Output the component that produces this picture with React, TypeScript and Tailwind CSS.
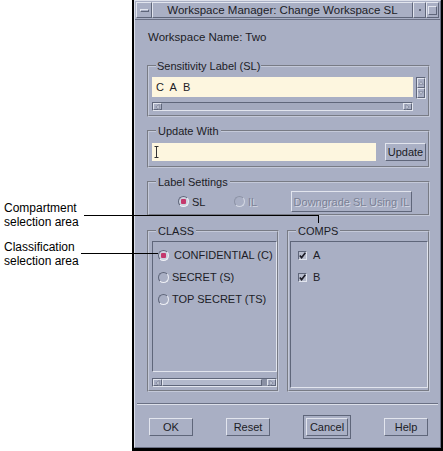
import React from 'react';

// bevel helpers, written out in full so Tailwind picks them up
const raised = 'border border-t-[#e2e5ee] border-l-[#e2e5ee] border-r-[#5f667a] border-b-[#5f667a]';
const sunken = 'border border-t-[#5f667a] border-l-[#5f667a] border-r-[#e2e5ee] border-b-[#e2e5ee]';
const groove = 'border-2 [border-style:groove] border-[#c4c9d9] min-w-0';

const Arrow = ({ dir }: { dir: 'up' | 'down' | 'left' | 'right' }) => {
  const pts = {
    up: '1,6 4,2 7,6',
    down: '1,2 4,6 7,2',
    left: '6,1 2,4 6,7',
    right: '2,1 6,4 2,7',
  }[dir];
  return (
    <svg width="8" height="8" viewBox="0 0 8 8">
      <polygon points={pts} fill="#c3c8d6" stroke="#7a8094" strokeWidth="0.8" />
    </svg>
  );
};

const HScroll = ({ thumb = false }: { thumb?: boolean }) => (
  <div className={`flex h-[9px] ${sunken} bg-[#a3a9be]`}>
    <div className={`w-[9px] flex items-center justify-center ${raised} bg-[#a9afc4]`}>
      <Arrow dir="left" />
    </div>
    {thumb ? (
      <div className="flex-1 flex">
        <div className={`flex-1 ${raised} bg-[#b3b9cc]`} />
        <div className="w-[5px] bg-[#8a90a4]" />
      </div>
    ) : (
      <div className="flex-1" />
    )}
    <div className={`w-[9px] flex items-center justify-center ${raised} bg-[#a9afc4]`}>
      <Arrow dir="right" />
    </div>
  </div>
);

const Radio = ({ on = false, dim = false }: { on?: boolean; dim?: boolean }) => (
  <span
    className={`w-[11px] h-[11px] shrink-0 rounded-full flex items-center justify-center border ${
      dim
        ? 'border-t-[#8d93a6] border-l-[#8d93a6] border-r-[#d4d8e3] border-b-[#d4d8e3]'
        : 'border-t-[#5f667a] border-l-[#5f667a] border-r-[#eef0f5] border-b-[#eef0f5]'
    } ${on ? 'bg-[#cdd1de]' : 'bg-[#a9afc4]'}`}
  >
    {on && <span className="w-[5px] h-[5px] rounded-[1px] bg-[#c4386c]" />}
  </span>
);

const Check = () => (
  <span className={`w-[9px] h-[9px] shrink-0 flex items-center justify-center ${sunken} bg-[#b7bccd]`}>
    <svg width="7" height="7" viewBox="0 0 7 7">
      <polyline points="0.8,3.4 2.6,5.6 6.4,0.8" fill="none" stroke="#1c1c26" strokeWidth="1.6" />
    </svg>
  </span>
);

const Button = ({ label, w, dim = false }: { label: string; w: string; dim?: boolean }) => (
  <div
    className={`${w} h-[18px] flex items-center justify-center ${raised} bg-[#aab0c5] ${
      dim ? 'text-[#7b8195] [text-shadow:1px_1px_0_#d6d9e4]' : ''
    }`}
  >
    {label}
  </div>
);

const Window = () => (
  <div className="w-[311px] h-[451px] shrink-0 flex flex-col border-l-2 border-r-2 border-b-[3px] border-black bg-[#a9afc4] text-[11px] leading-[14px]">
    <div className="flex-1 flex flex-col border border-t-[#dde0ea] border-l-[#dde0ea] border-r-[#6a7084] border-b-[#6a7084]">
      {/* title bar */}
      <div className="flex h-[19px] pt-[1px] pb-[1px] pl-[1px] pr-[1px] border-b border-[#6a7084]">
        <div className={`w-[16px] flex items-center justify-center ${raised}`}>
          <span className={`w-[9px] h-[3px] ${raised}`} />
        </div>
        <div className={`flex-1 flex items-center justify-center ${raised} text-[11.5px]`}>
          Workspace Manager: Change Workspace SL
        </div>
        <div className={`w-[13px] flex items-center justify-center ${raised}`}>
          <span className="w-[2px] h-[2px] bg-[#5f667a]" />
        </div>
        <div className={`w-[13px] flex items-center justify-center ${raised}`}>
          <span className={`w-[9px] h-[9px] ${raised}`} />
        </div>
      </div>

      {/* body */}
      <div className="flex-1 flex flex-col">
        <div className="pl-[12px] pr-[10px] flex flex-col">
          <div className="mt-[10px] pl-[1px] text-[11.5px]">Workspace Name: Two</div>

          <fieldset className={`mt-[15px] ${groove} pl-[3px] pr-[2px] pt-[4px] pb-[4px]`}>
            <legend className="ml-[4px] px-[1px]">Sensitivity Label (SL)</legend>
            <div className="flex">
              <div className="flex-1 h-[20px] bg-[#fdf6df] pl-[4px] flex items-center">C&nbsp; A&nbsp; B</div>
              <div className={`w-[10px] ml-[3px] flex flex-col ${sunken}`}>
                <div className={`flex-1 flex items-center justify-center ${raised}`}>
                  <Arrow dir="up" />
                </div>
                <div className={`flex-1 flex items-center justify-center ${raised}`}>
                  <Arrow dir="down" />
                </div>
              </div>
            </div>
            <div className="mt-[3px] mr-[13px]">
              <HScroll />
            </div>
          </fieldset>

          <fieldset className={`mt-[7px] ${groove} pl-[3px] pr-[2px] pt-[5px] pb-[5px]`}>
            <legend className="ml-[4px] px-[2px]">Update With</legend>
            <div className="flex">
              <div className="flex-1 h-[18px] bg-[#fdf6df] pl-[2px] flex items-center">
                <svg width="5" height="12" viewBox="0 0 5 12">
                  <path d="M0.5 0.5h4M2.5 0.5v11M0.5 11.5h4" stroke="#333" strokeWidth="1" fill="none" />
                </svg>
              </div>
              <div className="ml-[9px]">
                <Button label="Update" w="w-[41px]" />
              </div>
            </div>
          </fieldset>

          <fieldset className={`mt-[7px] ${groove} pl-[3px] pr-[2px] pt-[2px] pb-[2px]`}>
            <legend className="ml-[4px] px-[2px]">Label Settings</legend>
            <div className="flex items-center h-[21px] pl-[26px]">
              <div className="w-[56px] flex items-center gap-[3px]">
                <Radio on />
                <span>SL</span>
              </div>
              <div className="w-[57px] flex items-center gap-[3px]">
                <Radio dim />
                <span className="text-[#7b8195] [text-shadow:1px_1px_0_#d6d9e4]">IL</span>
              </div>
              <div className={`w-[121px] h-[21px] flex items-center justify-center ${raised} text-[#7b8195] [text-shadow:1px_1px_0_#d6d9e4] whitespace-nowrap`}>
                Downgrade SL Using IL
              </div>
            </div>
          </fieldset>

          <div className="mt-[8px] flex gap-[8px]">
            <fieldset className={`w-[132px] shrink-0 ${groove} pl-[3px] pr-0 pt-[3px] pb-[2px]`}>
              <legend className="ml-[4px] px-[2px]">CLASS</legend>
              <div className={`h-[131px] ${sunken} pt-[2px] pl-[5px] flex flex-col`}>
                <div className="h-[22px] flex items-center gap-[5px]">
                  <Radio on />
                  <span>CONFIDENTIAL (C)</span>
                </div>
                <div className="h-[22px] flex items-center gap-[3px]">
                  <Radio />
                  <span>SECRET (S)</span>
                </div>
                <div className="h-[22px] flex items-center gap-[3px]">
                  <Radio />
                  <span>TOP SECRET (TS)</span>
                </div>
              </div>
              <div className="mt-[6px]">
                <HScroll thumb />
              </div>
            </fieldset>
            <fieldset className={`flex-1 ${groove} pl-[1px] pr-0 pt-[3px] pb-[2px]`}>
              <legend className="ml-[6px] px-[2px]">COMPS</legend>
              <div className={`h-[147px] ${sunken} pt-[2px] pl-[7px] flex flex-col`}>
                <div className="h-[22px] flex items-center gap-[6px]">
                  <Check />
                  <span>A</span>
                </div>
                <div className="h-[22px] flex items-center gap-[6px]">
                  <Check />
                  <span>B</span>
                </div>
              </div>
            </fieldset>
          </div>
        </div>

        <div className="mt-[11px] mx-[2px] h-[2px] border-t border-b border-t-[#6a7084] border-b-[#dde0ea]" />

        <div className="mt-[10px] h-[24px] flex items-center justify-between pl-[14px] pr-[12px]">
          <Button label="OK" w="w-[44px]" />
          <Button label="Reset" w="w-[44px]" />
          <div className="w-[48px] h-[24px] p-[2px] border border-[#5f667a]">
            <Button label="Cancel" w="w-full" />
          </div>
          <Button label="Help" w="w-[44px]" />
        </div>
      </div>
    </div>
  </div>
);

export default function App() {
  return (
    <div className="relative flex w-[443px] h-[451px] bg-white overflow-hidden font-['Liberation_Sans',Arial,sans-serif] text-[#1c1c26]">
      <div className="w-[132px] shrink-0 pt-[201px] pl-[4px] text-[12px] leading-[14px] text-black">
        <div>
          Compartment
          <br />
          selection area
        </div>
        <div className="mt-[11px]">
          Classification
          <br />
          selection area
        </div>
      </div>
      <Window />

      {/* leader lines drawn over the window */}
      <div className="absolute left-[84px] top-[215px] w-[235px] h-[1px] bg-black" />
      <div className="absolute left-[318px] top-[215px] w-[1px] h-[8px] bg-black" />
      <div className="absolute left-[81px] top-[253px] w-[77px] h-[1px] bg-black" />
    </div>
  );
}
